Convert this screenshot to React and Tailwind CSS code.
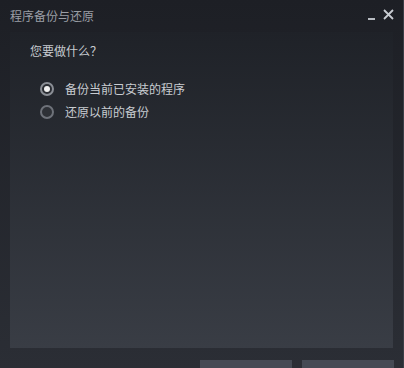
export default function App() {
  const font = { fontFamily: '"Noto Sans CJK SC", "Liberation Sans", sans-serif' };
  return (
    <div className="w-[404px] h-[368px] overflow-hidden relative bg-gradient-to-b from-[#1d1f25] to-[#2b2e35] text-[12px]" style={font}>
      <div className="absolute right-0 top-0 bottom-0 w-px bg-[#3a3e46]" />
      <div className="h-[32px] flex items-center justify-between pl-[10px] pr-[10px]">
        <span className="text-[#9a9ea5] text-[12px] leading-none -mt-[1px]">程序备份与还原</span>
        <div className="flex items-center gap-[8px] -mt-[4px]">
          <div className="w-[7px] h-[2px] bg-[#b8bcc2] mt-[10px]" />
          <svg width="11" height="11" viewBox="0 0 11 11">
            <path d="M1 1 L10 10 M10 1 L1 10" stroke="#c8ccd2" strokeWidth="1.8" />
          </svg>
        </div>
      </div>
      <div className="mx-[10px] w-[383px] h-[316px] bg-gradient-to-b from-[#1f2228] to-[#393d45]">
        <div className="pl-[20px] pt-[13px] text-[#c6cacf] leading-none">您要做什么？</div>
        <div className="pl-[30px] pt-[25px] flex flex-col gap-[9px]">
          <div className="flex items-center gap-[11px]">
            <div className="w-[14px] h-[14px] rounded-full border-2 border-[#8a8e95] flex items-center justify-center bg-[#2a2d33]">
              <div className="w-[6px] h-[6px] rounded-full bg-[#f0f0f0]" />
            </div>
            <span className="text-[#c8ccd1] leading-[14px]">备份当前已安装的程序</span>
          </div>
          <div className="flex items-center gap-[11px]">
            <div className="w-[14px] h-[14px] rounded-full border-2 border-[#6e727a] bg-[#2e3137]" />
            <span className="text-[#c8ccd1] leading-[14px]">还原以前的备份</span>
          </div>
        </div>
      </div>
      <div className="flex justify-end gap-[10px] pr-[10px] pt-[12px]">
        <div className="w-[92px] h-[20px] bg-[#454a54]" />
        <div className="w-[92px] h-[20px] bg-[#454a54]" />
      </div>
    </div>
  );
}
